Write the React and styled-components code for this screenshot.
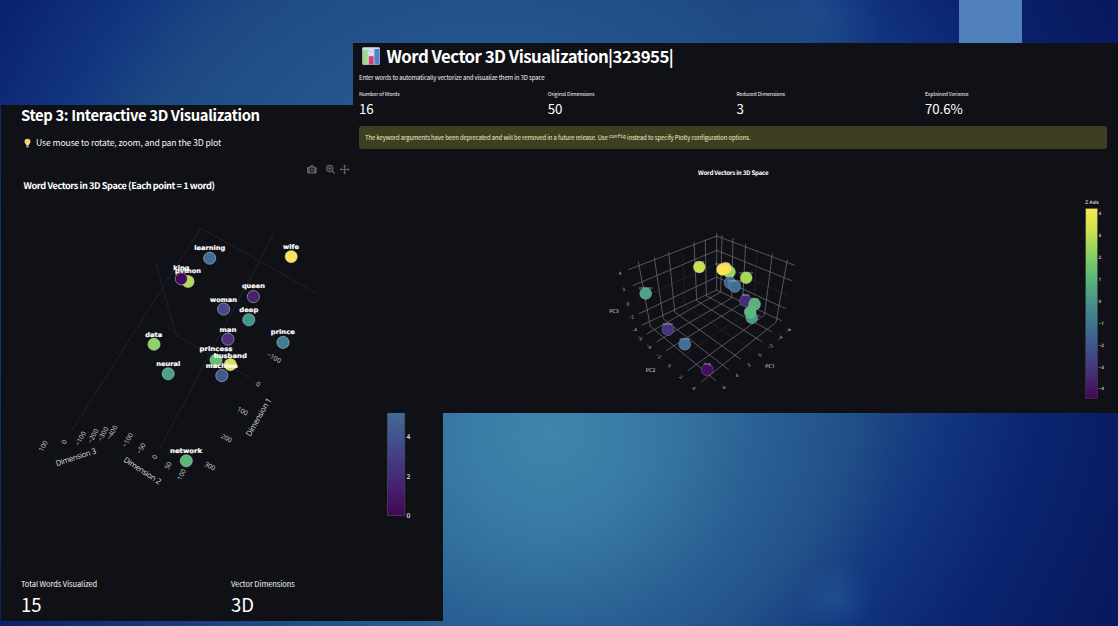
import React from "react";
import styled, { createGlobalStyle } from "styled-components";

const GlobalStyle = createGlobalStyle`
  * { box-sizing: border-box; }
  body { margin: 0; overflow: hidden; font-family: "Noto Sans CJK SC", "Open Sans", sans-serif; color: #f5f5f7; }
`;

const Slide = styled.main`
  position: relative;
  width: 1118px;
  height: 626px;
  overflow: hidden;
  background:
    radial-gradient(circle at 836px 598px, rgba(50, 112, 170, 0.32), rgba(50, 112, 170, 0) 38px),
    radial-gradient(circle at 815px 10px, rgba(50, 105, 160, 0.3), rgba(50, 105, 160, 0) 70px),
    radial-gradient(circle at 550px 435px, rgba(72, 150, 182, 0.72) 0, rgba(68, 144, 180, 0.6) 90px, rgba(60, 130, 172, 0.3) 200px, rgba(60, 130, 172, 0) 340px),
    radial-gradient(circle at 490px 310px, #285d91 0, #26598e 230px, #1d4983 390px, #123580 470px, #0b2470 560px, #08195f 680px);
`;

const Accent = styled.div`
  position: absolute;
  left: 959px;
  top: 0;
  width: 63px;
  height: 43px;
  background: #5081bd;
`;

const Window = styled.section`
  position: absolute;
  left: ${(p) => p.$x}px;
  top: ${(p) => p.$y}px;
  width: ${(p) => p.$w}px;
  height: ${(p) => p.$h}px;
  display: flex;
  flex-direction: column;
  background: #101116;
  overflow: hidden;
`;

const Heading = styled.h1`
  display: flex;
  align-items: center;
  gap: ${(p) => p.$gap || 0}px;
  margin: 0;
  padding-left: ${(p) => p.$inset}px;
  height: ${(p) => p.$h}px;
  font-size: ${(p) => p.$size}px;
  letter-spacing: ${(p) => p.$track || 0}px;
  font-weight: 700;
  line-height: 1;
  white-space: nowrap;
  color: #fff;
`;

const Caption = styled.p`
  display: flex;
  align-items: center;
  gap: 3px;
  margin: 0;
  padding-left: ${(p) => p.$inset}px;
  height: ${(p) => p.$h}px;
  font-size: ${(p) => p.$size}px;
  letter-spacing: ${(p) => p.$track || 0}px;
  line-height: 1;
  white-space: nowrap;
`;

const Metrics = styled.div`
  display: grid;
  grid-template-columns: repeat(${(p) => p.$cols}, ${(p) => p.$colWidth}px);
  padding-left: ${(p) => p.$inset}px;
`;

const Metric = styled.div`
  display: flex;
  flex-direction: column;
`;

const MetricLabel = styled.span`
  height: ${(p) => p.$h}px;
  line-height: ${(p) => p.$h}px;
  font-size: ${(p) => p.$size}px;
  letter-spacing: ${(p) => p.$track || 0}px;
  white-space: nowrap;
`;

const MetricValue = styled.span`
  height: ${(p) => p.$h}px;
  line-height: ${(p) => p.$h}px;
  font-size: ${(p) => p.$size}px;
  letter-spacing: ${(p) => p.$track || 0}px;
  color: #fff;
`;

const Notice = styled.div`
  display: flex;
  flex: none;
  align-items: center;
  margin: 10px 11px 10px 6px;
  padding-left: 6px;
  height: 23px;
  border-radius: 3px;
  background: #3e3f22;
  color: #f0f0c0;
  font-size: 5.900px;
  letter-spacing: -0.070px;
  line-height: 1;
  white-space: pre;
`;

const Code = styled.code`
  font-family: "Liberation Mono", monospace;
  font-size: 4.800px;
`;

const Plot = styled.svg`
  display: block;
  flex: none;
  text-rendering: geometricPrecision;
`;

const WORDS = [
  ["learning", 209.7, 258.2, "#3f6f98", 209.7, 249.5, 31],
  ["wife", 291.2, 256.6, "#fbe556", 291, 249.2, 16],
  ["python", 188, 281.5, "#b2dc52", 188, 273, 26],
  ["king", 181.3, 278.8, "#42095a", 181.3, 270, 16],
  ["queen", 253.4, 296.6, "#48216c", 253.4, 288, 23],
  ["woman", 223.6, 309, "#434a8c", 223.6, 301.8, 27],
  ["deep", 248.8, 319.8, "#40968b", 248.8, 311.5, 19],
  ["man", 227.9, 339.2, "#472f7b", 227.9, 332, 17],
  ["prince", 283, 342.4, "#3e7e93", 282.8, 333.8, 24],
  ["data", 154, 344.2, "#8bd465", 153.8, 336.8, 17],
  ["princess", 216, 360, "#65c06c", 216, 351, 33],
  ["husband", 230.3, 364.6, "#d7e34f", 230.3, 357.6, 33],
  ["neural", 168.2, 373.8, "#4aa384", 168.2, 366.2, 24],
  ["machine", 221.8, 375.6, "#42588f", 221.8, 368.4, 32],
  ["network", 186.3, 460.8, "#5bb77a", 186, 453, 32],
];

const TICKS = [
  ["100", 43, 446, -60], ["0", 64, 442, -60], ["−100", 80.5, 438.5, -62],
  ["−200", 93, 436, -62], ["−300", 103, 434, -62], ["−400", 112, 432.5, -62],
  ["−100", 127.5, 440, -60], ["−50", 141, 448.5, -60], ["0", 154.5, 457, -60],
  ["50", 168, 465.5, -60], ["100", 181.5, 474.5, -65], ["−100", 274, 357.5, 28],
  ["0", 258.3, 384, 28], ["100", 242.5, 411, 28], ["200", 226.5, 438, 28], ["300", 210, 466, 28],
];

const AXES = [
  ["Dimension 3", 75.8, 457, -18, 42],
  ["Dimension 2", 142.5, 470.5, 33, 43],
  ["Dimension 1", 258.5, 417, -60, 43],
];

const MAJOR = "M200.7 228L318 294M200.7 228L72 430M274 233L160 448M156 263L176 335L250 378";
const MINOR =
  "M188 245L290 305M175 268L275 325M160 290L262 350M144 314L240 369M128 340L225 396M112 366L208 422M96 392L190 446M222 238L104 430M243 250L126 438M262 261L146 444M292 268L180 452M308 284L200 450M186 222L62 412M220 220L247 330M240 225L262 340M60 412L125 414";

function CornerPlot() {
  return (
    <Plot width="442" height="410" viewBox="1 160 442 410">
      <defs>
        <linearGradient id="barLow" x1="0" y1="0" x2="0" y2="1">
          <stop offset="0" stopColor="#42728f" />
          <stop offset=".25" stopColor="#41588f" />
          <stop offset=".6" stopColor="#45307b" />
          <stop offset="1" stopColor="#440657" />
        </linearGradient>
      </defs>
      <g fill="#5d5e63">
        <path fillRule="evenodd" d="M308 167h1.5l1-1.7h2.8l1 1.7h1.5q1 0 1 1v4.4q0 1-1 1H308q-1 0-1-1V168q0-1 1-1zM311.900 167.500a2.400 2.400 0 1 0 .01 0zM311.900 168.600a1.300 1.300 0 1 1-.01 0z" />
        <circle cx="329.700" cy="168.500" r="3.200" fill="#5d5e63" fillOpacity=".35" stroke="#5d5e63" strokeWidth="1.200" />
        <path d="M331.700 171.400l.9-.9 2.500 2.400-.9 1zM329.200 167h1v1h1v1h-1v1h-1v-1h-1v-1h1z" />
        <path d="M344.600 164.500l1.800 2h-1.200v2.400h2.500v-1.200l1.900 1.800-1.900 1.800v-1.200h-2.500v2.300h1.200l-1.800 2-1.800-2h1.200v-2.300h-2.500v1.200l-1.900-1.800 1.900-1.800v1.200h2.500v-2.400h-1.200z" />
      </g>
      <text x="23.500" y="189.300" fill="#fff" fontSize="9.200" fontWeight="700" textLength="191.500" fontFamily="Noto Sans CJK SC">
        Word Vectors in 3D Space (Each point = 1 word)
      </text>
      <path d={MINOR} stroke="#15161b" strokeWidth="1" fill="none" />
      <path d={MAJOR} stroke="#222328" strokeWidth="1" fill="none" />
      <g fontFamily="Open Sans" fontSize="6.600" fill="#d5d5d8" textAnchor="middle">
        {TICKS.map(([t, x, y, r], i) => (
          <text key={i} transform={`translate(${x} ${y}) rotate(${r})`} y="2.400">{t}</text>
        ))}
      </g>
      <g fontFamily="Open Sans" fontSize="7.800" fill="#dcdcdf" textAnchor="middle">
        {AXES.map(([t, x, y, r, w]) => (
          <text key={t} transform={`translate(${x} ${y}) rotate(${r})`} y="2.800" textLength={w}>{t}</text>
        ))}
      </g>
      {WORDS.map(([w, x, y, c, tx, ty, len]) => (
        <g key={w}>
          <circle cx={x} cy={y} r="6.100" fill={c} stroke="#c9cdd2" strokeOpacity=".75" strokeWidth=".7" />
          <text x={tx} y={ty} fill="#fff" stroke="#fff" strokeWidth=".2" fontFamily="DejaVu Sans" fontWeight="700" fontSize="6.300" textAnchor="middle" textLength={len} lengthAdjust="spacingAndGlyphs">{w}</text>
        </g>
      ))}
      <rect x="387.300" y="405" width="17.500" height="110.500" fill="url(#barLow)" stroke="#4a4b50" strokeWidth=".7" />
      <g fontFamily="Open Sans" fontWeight="600" fontSize="6.600" fill="#e4e4e6">
        <text x="406.500" y="439.200">4</text>
        <text x="406.500" y="478.500">2</text>
        <text x="406.500" y="518.200">0</text>
      </g>
    </Plot>
  );
}

const WALL_LINES =
  "M638.3 261.3L650.3 326.300M654.300 257.300L663.300 318.700M668.700 252L674.700 312M694 242L696.700 300.700M705.300 239.700L706.300 295.700M716.700 233V290.500" +
  "M628.300 269.700L716.700 236M632.700 285.700L716.700 250.300M639 313.700L716.700 277M641.700 325.300L716.700 290" +
  "M716.700 236L794.700 265.300M716.700 250.300L791.700 280.700M716.700 277L785.700 308.700M716.700 290L782 321" +
  "M722 235L720.700 292M733 238L731.700 298M745.700 243.700L742.500 303M772.300 253.700L764.500 315M787.300 259.700L776 322.300";
const FLOOR_LINES =
  "M706.300 295.700L772 332M696.700 300.700L762 341.700M674.700 312L740.700 359.300M663.300 318.700L729 370M650.300 326.300L716 380.700" +
  "M720.700 292L646.700 334M731.700 298L656.700 341.700M742.500 303L666 350.700M764.500 315L687.700 370.700M776 322.300L701 382.300";
const FAINT_LINES =
  "M682.700 253L685 306L752 350M636 300L716.700 264L788.300 295.700M757.300 249.700L753.500 308L677 360";

const POINTS = [
  [699.3, 267, "#c9e14b", "word"],
  [729.5, 272, "#93d657", ""],
  [725.6, 268.2, "#f7df55", ""],
  [722.6, 269.4, "#fde552", "husband"],
  [746.2, 277.8, "#a5d854", "network"],
  [730, 282.8, "#406796", ""],
  [734.8, 286.4, "#416f94", "learning"],
  [645.7, 293.4, "#4ba486", "princess"],
  [745.5, 300.7, "#472b79", "data"],
  [751.8, 317.8, "#459d88", ""],
  [754.6, 304.2, "#54b27d", "deep"],
  [750.2, 312, "#59b87b", ""],
  [667.9, 329.6, "#46327e", "queen"],
  [684.8, 344.2, "#416f98", "prince"],
  [707.2, 369.6, "#440e5e", "king"],
];

const SMALL_TICKS = [
  ["4", 620, 273.5, -20], ["2", 624, 289.500, -20], ["0", 628, 304, -20], ["−2", 631.500, 317.300, -20], ["−4", 634.500, 330, -20],
  ["−6", 640, 338, 40], ["−4", 649, 346.500, 40], ["−2", 658.700, 356, 40], ["0", 669.500, 366, 40], ["2", 681, 377, 40], ["4", 694, 388.500, 40],
  ["−6", 788.500, 330.300, -40], ["−4", 780, 338, -40], ["−2", 770.500, 346.500, -40], ["0", 760, 355, -40], ["2", 749, 365, -40], ["4", 737, 375.500, -40], ["6", 724, 387.300, -40],
];

function CubePlot() {
  return (
    <Plot width="765" height="254" viewBox="353 159 765 254">
      <defs>
        <linearGradient id="barFull" x1="0" y1="0" x2="0" y2="1">
          <stop offset="0" stopColor="#fae755" />
          <stop offset=".13" stopColor="#c5df50" />
          <stop offset=".25" stopColor="#84cf65" />
          <stop offset=".38" stopColor="#57b47d" />
          <stop offset=".5" stopColor="#479187" />
          <stop offset=".63" stopColor="#3f6f8f" />
          <stop offset=".75" stopColor="#414f8c" />
          <stop offset=".88" stopColor="#462b76" />
          <stop offset="1" stopColor="#440556" />
        </linearGradient>
      </defs>
      <text x="698" y="175" fill="#fff" fontWeight="700" fontSize="6.200" textLength="70.500" fontFamily="Noto Sans CJK SC">Word Vectors in 3D Space</text>
      <path d={FAINT_LINES} stroke="#25262b" strokeWidth=".7" fill="none" />
      <path d={WALL_LINES + FLOOR_LINES} stroke="#6c6d71" strokeWidth=".75" fill="none" />
      <g fontFamily="Open Sans" fontSize="4.400" fill="#d4d4d8" textAnchor="middle">
        {SMALL_TICKS.map(([t, x, y, r], i) => (
          <text key={i} transform={`translate(${x} ${y}) rotate(${r})`} y="1.500">{t}</text>
        ))}
      </g>
      <g fontFamily="Open Sans" fontSize="5.300" fill="#e2e2e5">
        <text x="609.300" y="313.300" textLength="9.500">PC3</text>
        <text x="645.800" y="372" textLength="9.500">PC2</text>
        <text x="765.300" y="368" textLength="9.500">PC1</text>
      </g>
      <circle cx="759.300" cy="315.800" r="1.500" fill="#47206d" />
      {POINTS.map(([x, y, c, w], i) => (
        <g key={i}>
          <circle cx={x} cy={y} r="6" fill={c} stroke="#c3c6cc" strokeOpacity=".5" strokeWidth=".5" />
          {w && <text x={x} y={y - 4.3} fontFamily="Open Sans" fontSize="3.600" fill="#c9cad0" fillOpacity=".85" textAnchor="middle">{w}</text>}
        </g>
      ))}
      <rect x="1085.700" y="208.500" width="11.800" height="190" fill="url(#barFull)" stroke="#4b4c50" strokeWidth=".5" />
      <g fontFamily="Open Sans" fontWeight="600" fontSize="4.600" fill="#dddde0">
        <text x="1085.300" y="203.600" fontSize="5" textLength="13.500">Z Axis</text>
        {[4, 3, 2, 1, 0, -1, -2, -3, -4].map((v, i) => (
          <text key={v} x="1098.600" y={215.2 + i * 21.9}>{v < 0 ? `−${-v}` : v}</text>
        ))}
      </g>
    </Plot>
  );
}

const ChartIcon = () => (
  <svg width="18" height="18" viewBox="0 0 18 18">
    <rect x=".3" y=".3" width="17.400" height="17.400" rx="1" fill="#dcdde6" />
    <path d="M0 4.500h18M0 9h18M0 13.500h18M6 0v18M12 0v18" stroke="#c3c8d6" strokeWidth=".5" />
    <rect x="1" y="3" width="4.600" height="14.500" fill="#9bd88b" />
    <rect x="6.800" y="9.200" width="4.800" height="8.300" fill="#d43f6a" />
    <rect x="12.400" y="2" width="4.800" height="15.500" fill="#4a86d4" />
  </svg>
);

const BulbIcon = () => (
  <svg width="11" height="11" viewBox="0 0 11 11">
    <path d="M5.500 .7a3.100 3.100 0 0 0-3 3.100c0 1.500 1.300 2.200 1.700 3.500h2.600c.4-1.300 1.700-2 1.700-3.500a3.100 3.100 0 0 0-3-3.100z" fill="#f6cc6c" />
    <path d="M4.500 3.500l1 1.200 1-1.200M5.500 4.700v2.500" stroke="#fff3c4" strokeWidth=".7" fill="none" />
    <rect x="4.300" y="7.300" width="2.400" height="2.300" rx=".6" fill="#b9a98a" />
  </svg>
);

const HEADLINE_METRICS = [
  ["Number of Words", "16"],
  ["Original Dimensions", "50"],
  ["Reduced Dimensions", "3"],
  ["Explained Variance", "70.6%"],
];

export default function App() {
  return (
    <>
      <GlobalStyle />
      <Slide>
        <Accent />
        <Window $x={1} $y={105} $w={442} $h={516}>
          <Heading $inset={20} $h={21} $size={14.8} $track={-0.36}>Step 3: Interactive 3D Visualization</Heading>
          <Caption $inset={21} $h={34} $size={8.7} $track={-0.14}><BulbIcon />Use mouse to rotate, zoom, and pan the 3D plot</Caption>
          <CornerPlot />
          <Metrics $cols={2} $colWidth={210} $inset={20}>
            {[["Total Words Visualized", "15"], ["Vector Dimensions", "3D"]].map(([l, v]) => (
              <Metric key={l}>
                <MetricLabel $h={28} $size={7.5} $track={-0.08}>{l}</MetricLabel>
                <MetricValue $h={12} $size={18.5}>{v}</MetricValue>
              </Metric>
            ))}
          </Metrics>
        </Window>
        <Window $x={353} $y={43} $w={765} $h={370}>
          <Heading $inset={9} $h={26} $gap={6.5} $size={16.8} $track={-0.52}><ChartIcon />Word Vector 3D Visualization|323955|</Heading>
          <Caption $inset={6} $h={18} $size={6} $track={-0.12}>Enter words to automatically vectorize and visualize them in 3D space</Caption>
          <Metrics $cols={4} $colWidth={188.7} $inset={6}>
            {HEADLINE_METRICS.map(([l, v]) => (
              <Metric key={l}>
                <MetricLabel $h={14} $size={5.2} $track={-0.12}>{l}</MetricLabel>
                <MetricValue $h={15} $size={13.3} $track={-0.1}>{v}</MetricValue>
              </Metric>
            ))}
          </Metrics>
          <Notice>The keyword arguments have been deprecated and will be removed in a future release. Use <Code>config</Code> instead to specify Plotly configuration options.</Notice>
          <CubePlot />
        </Window>
      </Slide>
    </>
  );
}
